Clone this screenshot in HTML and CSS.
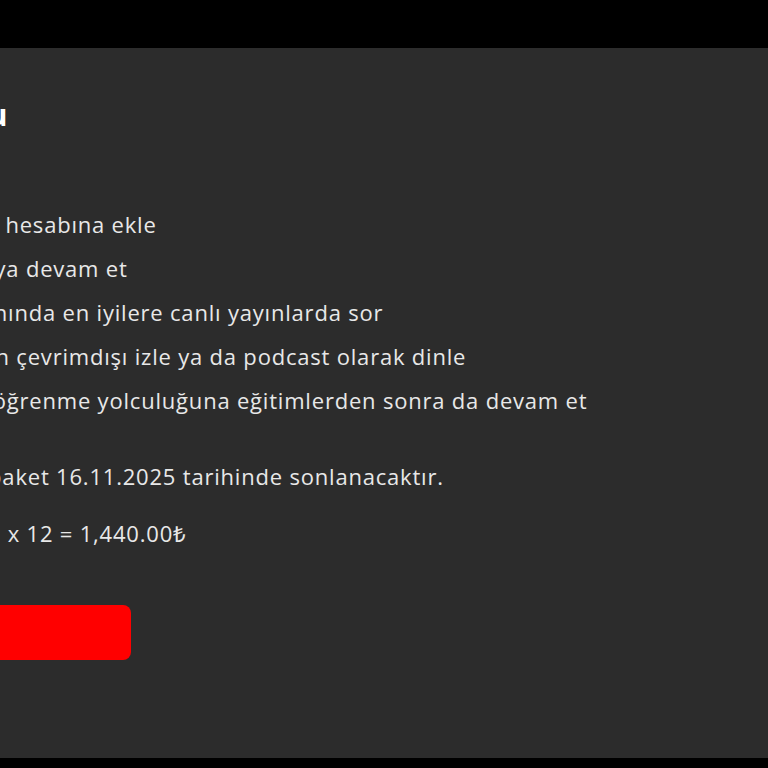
FILE: index.html
```html
<!DOCTYPE html>
<html lang="tr">
<head>
  <meta charset="UTF-8">
  <title>Paket Durumu</title>
  <meta name="viewport" content="width=device-width, initial-scale=1.0">
  <link rel="stylesheet" href="styles.css">
</head>
<body>
<header class="ust-bar"></header>

<main class="panel">
  <div class="icerik">
    <h2 class="baslik">Paket Durumu</h2>

    <ul class="ozellikler">
      <li>Bu eğitimleri hesabına ekle</li>
      <li>Güçlü kalmaya devam et</li>
      <li>Merakını alanında en iyilere canlı yayınlarda sor</li>
      <li>Uygulamadan çevrimdışı izle ya da podcast olarak dinle</li>
      <li>Topluluk ile öğrenme yolculuğuna eğitimlerden sonra da devam et</li>
    </ul>

    <p class="bitis">Kullandığın paket 16.11.2025 tarihinde sonlanacaktır.</p>
    <p class="fiyat">Toplam 120₺ x 12 = 1,440.00₺</p>

    <button class="satin-al">Satın Al</button>
  </div>
</main>
</body>
</html>
```

FILE: styles.css
```css
html, body {
  margin: 0;
  padding: 0;
  background: #000;
  color: #e8e8e8;
  font-family: 'Open Sans', sans-serif;
  overflow: hidden;
}
.ust-bar {
  height: 48px;
  background: #000;
}
.panel {
  background: #2c2c2c;
  height: 710px;
  overflow: hidden;
}
.icerik {
  margin-left: -141px;
  padding-top: 47px;
  display: flex;
  flex-direction: column;
  align-items: flex-start;
}
.baslik {
  margin: 0 0 0 -70px;
  font-size: 30px;
  font-weight: 700;
  color: #fff;
  line-height: 40px;
  white-space: nowrap;
}
.ozellikler {
  list-style: none;
  margin: 67px 0 0 0;
  padding: 0;
}
.ozellikler li {
  font-size: 22px;
  letter-spacing: 0.8px;
  line-height: 44px;
  white-space: nowrap;
}
.bitis, .fiyat {
  margin: 0;
  font-size: 22px;
  letter-spacing: 0.8px;
  line-height: 44px;
  white-space: nowrap;
}
.bitis {
  margin-top: 32px;
}
.fiyat {
  margin-top: 13px;
}
.satin-al {
  margin-top: 50px;
  width: 272px;
  height: 55px;
  border: none;
  border-radius: 8px;
  background: #ff0000;
  color: #fff;
  font-family: 'Open Sans', sans-serif;
  font-size: 18px;
  font-weight: 700;
  text-align: left;
  padding-left: 24px;
}
```
